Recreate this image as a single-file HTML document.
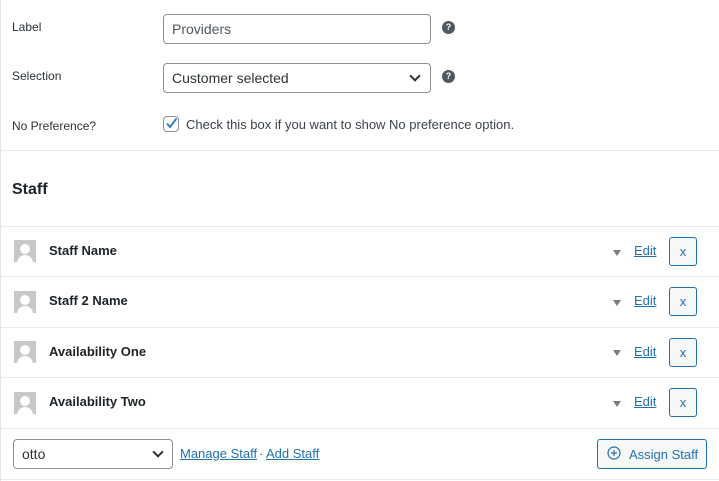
<!DOCTYPE html>
<html><head><style>
*{box-sizing:border-box;margin:0;padding:0}
body{width:719px;height:481px;background:#fff;font-family:"Liberation Sans",sans-serif;color:#1d2327;position:relative;overflow:hidden}
.a{position:absolute}
.lbl{font-size:12px;color:#2c3338}
.inp{border:1px solid #8c8f94;border-radius:4px;background:#fff;font-size:14px;color:#2c3338;padding-left:8px;line-height:28px}
.q{width:13px;height:13px;border-radius:50%;background:#50575e;color:#fff;font-size:9px;font-weight:bold;text-align:center;line-height:13px}
.hr{left:1px;right:0;height:1px;background:#eaeaea}
.av{width:22px;height:22px;background:#c8c8c8;overflow:hidden}
.av:before{content:"";position:absolute;left:6px;top:4px;width:10px;height:10px;border-radius:50%;background:#fff}
.av:after{content:"";position:absolute;left:3px;top:15px;width:16px;height:12px;border-radius:8px 8px 0 0;background:#fff}
.nm{font-size:13px;font-weight:bold;color:#1d2327}
.tri{width:0;height:0;border-left:4px solid transparent;border-right:4px solid transparent;border-top:6px solid #787c82}
.ed{font-size:13px;color:#2271b1;text-decoration:underline}
.x{width:28px;height:29px;border:1px solid #2271b1;border-radius:3px;background:#f6f7f7;color:#2271b1;font-size:13px;text-align:center;line-height:27px}
.chev{width:8px;height:8px;border-right:2px solid #2c3338;border-bottom:2px solid #2c3338;transform:rotate(45deg)}
</style></head><body>
<div class="a" style="left:0;top:0;width:1px;height:481px;background:#e2e4e7"></div>
<div class="a lbl" style="left:12px;top:20px">Label</div>
<div class="a inp" style="left:163px;top:14px;width:268px;height:30px;color:#50575e">Providers</div>
<div class="a q" style="left:442px;top:21px">?</div>
<div class="a lbl" style="left:12px;top:69px">Selection</div>
<div class="a inp" style="left:163px;top:63px;width:268px;height:30px">Customer selected</div>
<div class="a chev" style="left:411px;top:72px"></div>
<div class="a q" style="left:442px;top:70px">?</div>
<div class="a lbl" style="left:12px;top:119px">No Preference?</div>
<div class="a" style="left:163px;top:116px;width:16px;height:16px;border:1px solid #8c8f94;border-radius:4px"></div>
<svg class="a" style="left:164px;top:116px" width="15" height="15" viewBox="0 0 15 15"><path d="M3 7.5 L6 11 L12.5 2.5" fill="none" stroke="#3582c4" stroke-width="2"/></svg>
<div class="a" style="left:186px;top:117px;font-size:13px;color:#3c434a">Check this box if you want to show No preference option.</div>
<div class="a hr" style="top:150px"></div>
<div class="a" style="left:12px;top:181px;font-size:16px;font-weight:bold">Staff</div>
<div class="a hr" style="top:226px"></div>

<div class="a av" style="left:14px;top:240px"></div><div class="a nm" style="left:49px;top:243px">Staff Name</div>
<div class="a tri" style="left:613px;top:250px"></div><div class="a ed" style="left:634px;top:243px">Edit</div><div class="a x" style="left:669px;top:237px">x</div>
<div class="a hr" style="top:276px"></div>
<div class="a av" style="left:14px;top:291px"></div><div class="a nm" style="left:49px;top:293px">Staff 2 Name</div>
<div class="a tri" style="left:613px;top:300px"></div><div class="a ed" style="left:634px;top:293px">Edit</div><div class="a x" style="left:669px;top:287px">x</div>
<div class="a hr" style="top:327px"></div>
<div class="a av" style="left:14px;top:341px"></div><div class="a nm" style="left:49px;top:344px">Availability One</div>
<div class="a tri" style="left:613px;top:350px"></div><div class="a ed" style="left:634px;top:344px">Edit</div><div class="a x" style="left:669px;top:338px">x</div>
<div class="a hr" style="top:377px"></div>
<div class="a av" style="left:14px;top:392px"></div><div class="a nm" style="left:49px;top:394px">Availability Two</div>
<div class="a tri" style="left:613px;top:401px"></div><div class="a ed" style="left:634px;top:394px">Edit</div><div class="a x" style="left:669px;top:388px">x</div>
<div class="a hr" style="top:428px"></div>

<div class="a inp" style="left:13px;top:439px;width:160px;height:30px">otto</div>
<div class="a chev" style="left:154px;top:448px"></div>
<div class="a ed" style="left:180px;top:446px">Manage Staff</div>
<div class="a" style="left:259px;top:446px;font-size:13px;color:#50575e">·</div>
<div class="a ed" style="left:266px;top:446px">Add Staff</div>
<div class="a" style="left:597px;top:439px;width:110px;height:30px;border:1px solid #2271b1;border-radius:3px;background:#f6f7f7"></div>
<svg class="a" style="left:607px;top:446px" width="14" height="14" viewBox="0 0 14 14"><circle cx="7" cy="7" r="6" fill="none" stroke="#2271b1" stroke-width="1.2"/><path d="M7 4v6M4 7h6" stroke="#2271b1" stroke-width="1.2"/></svg>
<div class="a" style="left:629px;top:447px;font-size:13px;color:#2271b1">Assign Staff</div>
<div class="a hr" style="top:479px"></div>
</body></html>
